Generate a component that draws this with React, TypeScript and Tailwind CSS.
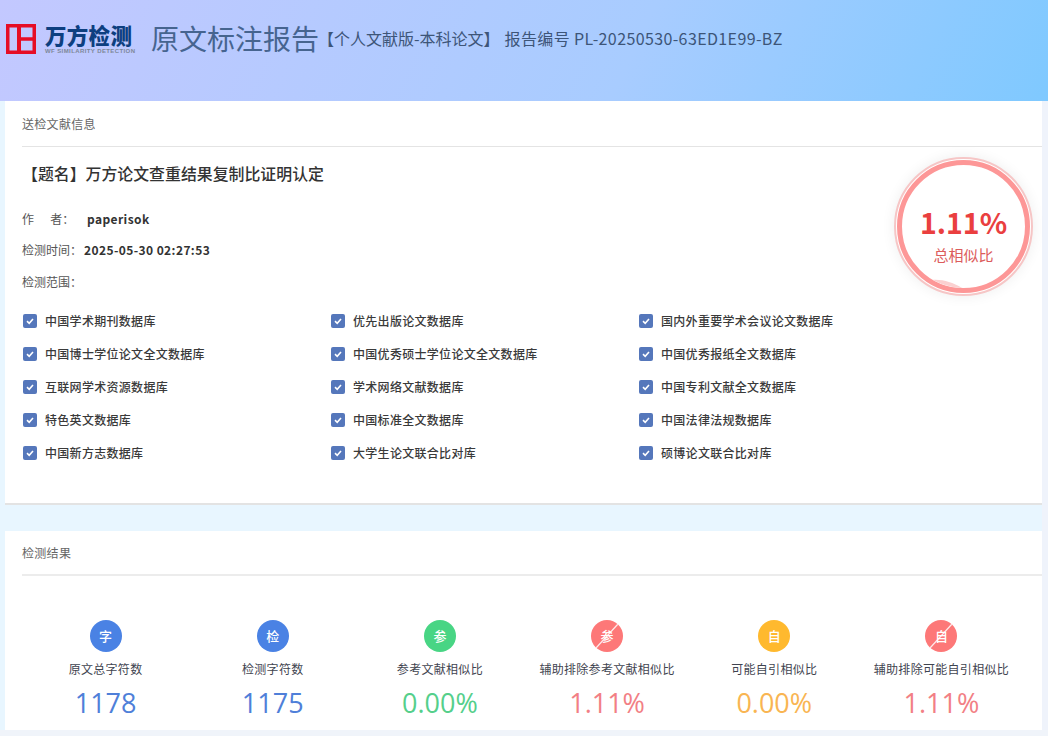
const FONT = 'font-["Noto_Sans_CJK_SC","Liberation_Sans",sans-serif]';

const DATABASES = [
  ['中国学术期刊数据库', '优先出版论文数据库', '国内外重要学术会议论文数据库'],
  ['中国博士学位论文全文数据库', '中国优秀硕士学位论文全文数据库', '中国优秀报纸全文数据库'],
  ['互联网学术资源数据库', '学术网络文献数据库', '中国专利文献全文数据库'],
  ['特色英文数据库', '中国标准全文数据库', '中国法律法规数据库'],
  ['中国新方志数据库', '大学生论文联合比对库', '硕博论文联合比对库'],
];

const STATS = [
  { icon: '字', label: '原文总字符数', value: '1178', bg: 'bg-[#4a82e4]', text: 'text-[#4f7fd9]', crossed: false },
  { icon: '检', label: '检测字符数', value: '1175', bg: 'bg-[#4a82e4]', text: 'text-[#4f7fd9]', crossed: false },
  { icon: '参', label: '参考文献相似比', value: '0.00%', bg: 'bg-[#48d584]', text: 'text-[#55cf8b]', crossed: false },
  { icon: '参', label: '辅助排除参考文献相似比', value: '1.11%', bg: 'bg-[#fd7878]', text: 'text-[#f27f85]', crossed: true },
  { icon: '自', label: '可能自引相似比', value: '0.00%', bg: 'bg-[#ffb92e]', text: 'text-[#f9b552]', crossed: false },
  { icon: '自', label: '辅助排除可能自引相似比', value: '1.11%', bg: 'bg-[#fd7878]', text: 'text-[#f27f85]', crossed: true },
];

function Logo() {
  return (
    <div className="flex items-center gap-[9px]">
      <svg width="30" height="30" viewBox="0 0 30 30" className="shrink-0">
        <rect x="1.75" y="1.75" width="26.5" height="26.5" fill="none" stroke="#e60d25" strokeWidth="3.5" />
        <path d="M13 1V29" fill="none" stroke="#e60d25" strokeWidth="4" />
        <path d="M13 15H29" fill="none" stroke="#e60d25" strokeWidth="3.5" />
      </svg>
      <div className="w-[90px]">
        <div className="text-[21.5px] leading-[24px] font-black tracking-[0.3px] whitespace-nowrap text-[#0d3f80]">万方检测</div>
        <div className={'text-[6px] leading-[8px] font-bold tracking-[0.4px] whitespace-nowrap text-[#7d8798] font-["Liberation_Sans",sans-serif]'}>
          WF SIMILARITY DETECTION
        </div>
      </div>
    </div>
  );
}

function ScoreBadge() {
  return (
    <div className="absolute top-[56px] right-[9px] flex h-[139px] w-[139px] items-center justify-center rounded-full border-2 border-[#f6c6c6] bg-white p-[1px] shadow-[0_0_14px_rgba(0,0,0,0.07)]">
      <div className="relative flex h-full w-full flex-col items-center justify-center overflow-hidden rounded-full border-[5px] border-[#fd9797] pt-[15px]">
        <div className="text-[28.5px] leading-[38px] font-bold text-[#ea3f3f]">1.11%</div>
        <div className="mt-[3px] text-[15px] leading-[22px] text-[#dc5c5c]">总相似比</div>
        <svg className="absolute bottom-0 left-0" width="125" height="10" viewBox="0 0 125 10">
          <path d="M30 2C40 1 50 4 60 10L38 10Z" fill="#fbd0d0" />
        </svg>
      </div>
    </div>
  );
}

function DbItem({ name }: { name: string }) {
  return (
    <div className="flex items-center gap-2 pl-[1px]">
      <span className="flex h-[14px] w-[14px] items-center justify-center rounded-[2px] bg-[#5577bb]">
        <svg width="10" height="10" viewBox="0 0 10 10">
          <path d="M2 5.2L4.2 7.3L8 3" fill="none" stroke="#fff" strokeWidth="1.6" />
        </svg>
      </span>
      <span className="text-[12px] font-medium tracking-[0.3px] text-[#3a3a3a]">{name}</span>
    </div>
  );
}

function Stat({ s }: { s: (typeof STATS)[number] }) {
  return (
    <div className="flex flex-col items-center">
      <div className={`relative flex h-8 w-8 items-center justify-center overflow-hidden rounded-full text-[13px] font-medium text-white ${s.bg}`}>
        {s.icon}
        {s.crossed && (
          <svg className="absolute inset-0" width="32" height="32" viewBox="0 0 32 32">
            <path d="M5 28L27 4" stroke="#fff" strokeWidth="1.2" opacity="0.85" />
          </svg>
        )}
      </div>
      <div className="mt-[7px] text-[12px] leading-[20px] tracking-[0.3px] whitespace-nowrap text-[#3f4450]">{s.label}</div>
      <div className={`mt-[6px] font-["Open_Sans",sans-serif] text-[27px] leading-[36px] ${s.text}`}>{s.value}</div>
    </div>
  );
}

export default function App() {
  return (
    <div className={`h-[736px] w-[1048px] overflow-hidden bg-[#e8f6ff] ${FONT}`}>
      <header className="flex h-[101px] items-start bg-[linear-gradient(115deg,#c3c8ff_0%,#a8ccff_60%,#7fc9ff_100%)] pt-[23px] pl-[6px]">
        <Logo />
        <h1 className="ml-[16px] -mt-[2px] text-[28px] leading-[34px] font-normal whitespace-nowrap text-[#46648f]">原文标注报告</h1>
        <span className="mt-[5px] -ml-[1px] text-[16px] leading-[20px] whitespace-nowrap text-[#3d5578]">【个人文献版-本科论文】</span>
        <span className="mt-[5px] ml-[5px] text-[16px] leading-[20px] tracking-[0.38px] whitespace-nowrap text-[#3d5578]">报告编号 PL-20250530-63ED1E99-BZ</span>
      </header>

      <div className="flex h-[629px]">
        <main className="ml-[5px] w-[1037px]">
          <section className="relative h-[404px] border-b-2 border-[#e3e3e3] bg-white pl-[17px]">
            <div className="flex h-[46px] items-center border-b border-[#e4e4e4] text-[12px] tracking-[0.3px] text-[#666]">送检文献信息</div>
            <h2 className="mt-[15px] text-[15.9px] leading-[24px] font-medium text-[#333]">【题名】万方论文查重结果复制比证明认定</h2>
            <div className="mt-[21px] flex h-[24px] items-center text-[12px] text-[#555]">
              <span className="w-[65px] whitespace-pre">作{'      '}者：</span>
              <span className="font-bold tracking-[0.4px] text-[#333]">paperisok</span>
            </div>
            <div className="mt-[7px] flex h-[24px] items-center text-[12px] text-[#555]">
              <span className="w-[62px]">检测时间：</span>
              <span className="font-bold tracking-[0.4px] text-[#333]">2025-05-30 02:27:53</span>
            </div>
            <div className="mt-[8px] flex h-[24px] items-center text-[12px] text-[#555]">检测范围：</div>
            <div className="mt-[17px] flex flex-col gap-[13px]">
              {DATABASES.map((row) => (
                <div key={row[0]} className="grid h-[20px] grid-cols-[308px_308px_1fr] items-center">
                  {row.map((name) => (
                    <DbItem key={name} name={name} />
                  ))}
                </div>
              ))}
            </div>
            <ScoreBadge />
          </section>

          <section className="mt-[26px] h-[199px] bg-white px-[17px]">
            <div className="-mr-[17px] flex h-[45px] items-center border-b-2 border-[#ececec] text-[12px] tracking-[0.3px] text-[#666]">检测结果</div>
            <div className="mt-[44px] grid grid-cols-6">
              {STATS.map((s) => (
                <Stat key={s.label} s={s} />
              ))}
            </div>
          </section>
        </main>
        <div className="flex-1 bg-[#eff3fb]" />
      </div>
      <div className="h-[6px] bg-[#f0f4fa]" />
    </div>
  );
}
